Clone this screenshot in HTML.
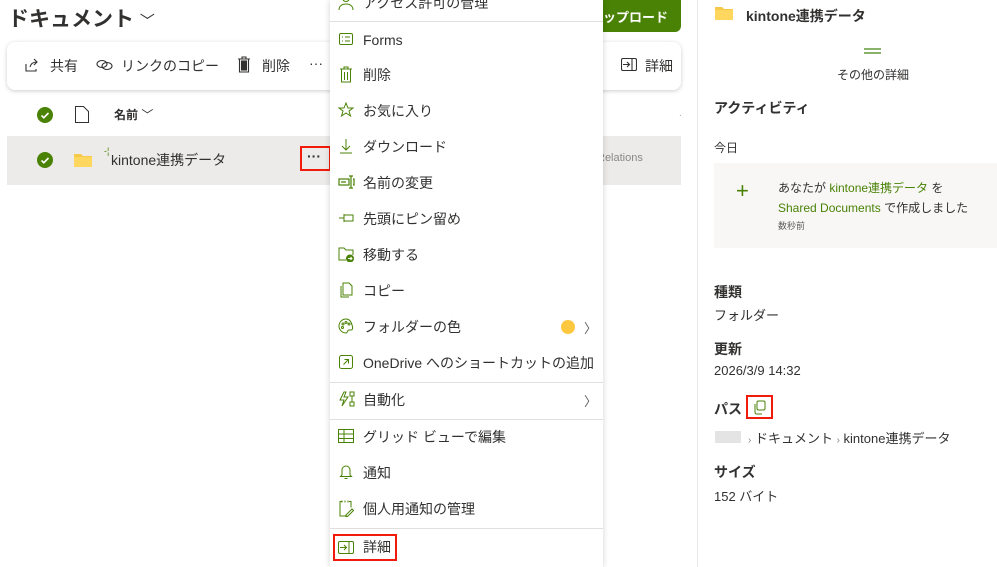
<!DOCTYPE html>
<html><head><meta charset="utf-8"><style>
*{box-sizing:border-box;margin:0;padding:0}
body{width:997px;height:567px;overflow:hidden;background:#fff;font-family:"Liberation Sans","Noto Sans CJK JP",sans-serif;color:#323130;position:relative}
.a{position:absolute;white-space:nowrap}
.mi{position:absolute;left:330px;width:273px;height:36px;font-size:14px;display:flex;align-items:center;color:#323130}
.mi svg{position:absolute;left:8px;top:9px}
.mi span{position:absolute;left:33px}
.dv{position:absolute;left:330px;width:273px;height:1px;background:#e1dfdd}
.g{color:#498205}
.lbl{font-size:14px;font-weight:bold;color:#323130}
.val{font-size:13px;color:#323130}
</style></head><body>
<div class="a" style="left:8px;top:3px;font-size:21px;font-weight:bold">ドキュメント <span style="font-weight:normal;font-size:15px">﹀</span></div>
<div class="a" style="left:7px;top:42px;width:674px;height:48px;border-radius:8px;background:#fff;box-shadow:0 1px 4px rgba(0,0,0,.2)"></div>
<svg class="a" style="left:24px;top:57px" width="16" height="16" viewBox="0 0 16 16" fill="none" stroke="#323130" stroke-width="1.1"><path d="M2 7v7h10v-2M6 10c1-4 4-5 7-5M10 2l3 3-3 3"/></svg>
<div class="a" style="left:50px;top:56px;font-size:14px">共有</div>
<svg class="a" style="left:96px;top:58px" width="18" height="14" viewBox="0 0 18 14" fill="none" stroke="#323130" stroke-width="1.1"><ellipse cx="6" cy="6" rx="5" ry="3.5"/><ellipse cx="11" cy="8" rx="5" ry="3.5"/></svg>
<div class="a" style="left:121px;top:56px;font-size:14px">リンクのコピー</div>
<svg class="a" style="left:237px;top:56px" width="14" height="17" viewBox="0 0 14 17" fill="none" stroke="#323130" stroke-width="1.1"><path d="M1 3h12M5 3V1h4v2M2.5 3v13h9V3"/><rect x="4.5" y="5" width="5" height="9" fill="#323130"/></svg>
<div class="a" style="left:262px;top:56px;font-size:14px">削除</div>
<div class="a" style="left:309px;top:55px;font-size:14px">···</div>
<div class="a" style="left:603px;top:0;width:78px;height:32px;background:#498205;border-radius:0 0 6px 0"></div>
<div class="a" style="left:603px;top:7px;font-size:13px;color:#fff;font-weight:bold">ップロード</div>
<svg class="a" style="left:621px;top:58px" width="16" height="13" viewBox="0 0 16 13" fill="none" stroke="#323130" stroke-width="1.1"><rect x=".5" y=".5" width="15" height="12" rx="1.5"/><path d="M11 1v11M2 6.5h6M6 4l2.5 2.5L6 9"/></svg>
<div class="a" style="left:645px;top:56px;font-size:14px">詳細</div>
<div class="a" style="left:37px;top:107px;width:16px;height:16px;border-radius:50%;background:#498205"></div>
<svg class="a" style="left:37px;top:107px" width="16" height="16"><path d="M4.5 8.5l2.3 2.2L11.5 6" stroke="#fff" stroke-width="1.6" fill="none"/></svg>
<svg class="a" style="left:75px;top:106px" width="14" height="17" viewBox="0 0 14 17" fill="none" stroke="#323130"><path d="M.5.5h8l5 5v11H.5z"/></svg>
<div class="a" style="left:114px;top:106px;font-size:12px;font-weight:bold">名前 <span style="font-weight:normal">﹀</span></div>
<div class="a" style="left:679px;top:108px;font-size:10px;color:#aaa">.</div>
<div class="a" style="left:7px;top:136px;width:674px;height:49px;background:#edebe9"></div>
<div class="a" style="left:37px;top:152px;width:16px;height:16px;border-radius:50%;background:#498205"></div>
<svg class="a" style="left:37px;top:152px" width="16" height="16"><path d="M4.5 8.5l2.3 2.2L11.5 6" stroke="#fff" stroke-width="1.6" fill="none"/></svg>
<svg class="a" style="left:74px;top:153px" width="18" height="14"><path d="M0 1h7l2 2h9v11H0z" fill="#f7c948"/><path d="M0 4h18v10H0z" fill="#ffd75e"/></svg>
<div class="a" style="left:104px;top:146px;font-size:9px;color:#498205">-¦</div>
<div class="a" style="left:111px;top:150px;font-size:14px">kintone連携データ</div>
<div class="a" style="left:300px;top:146px;width:31px;height:25px;border:2px solid #f21a0a"></div>
<div class="a" style="left:307px;top:148px;font-size:14px;font-weight:bold">···</div>
<div class="a" style="left:597px;top:152px;font-size:11px;color:#8a8886">Relations</div>
<div class="a" style="left:330px;top:0;width:273px;height:567px;background:#fff;box-shadow:0 0 6px rgba(0,0,0,.18)"></div>
<div class="mi" style="top:-15px"><svg width="16" height="16" viewBox="0 0 16 16" fill="none" stroke="#498205"><circle cx="8" cy="4" r="3.5"/><path d="M1 16c0-4 3-6 7-6s7 2 7 6"/></svg><span>アクセス許可の管理</span></div>
<div class="dv" style="top:21px"></div>
<div class="mi" style="top:22px"><svg width="16" height="16" viewBox="0 0 16 16" fill="none" stroke="#498205"><rect x="1.5" y="2.5" width="13" height="11" rx="1.5"/><path d="M4 6h1M7 6h5M4 10h1M7 10h5"/></svg><span>Forms</span></div>
<div class="mi" style="top:57px"><svg width="16" height="17" viewBox="0 0 16 17" fill="none" stroke="#498205"><path d="M2 3h12M6 3V1h4v2M3.5 3v13h9V3M6.5 6v8M9.5 6v8"/></svg><span>削除</span></div>
<div class="mi" style="top:93px"><svg width="16" height="16" viewBox="0 0 16 16" fill="none" stroke="#498205"><path d="M8 1l2 5h5l-4 3 1.5 5L8 11l-4.5 3L5 9 1 6h5z"/></svg><span>お気に入り</span></div>
<div class="mi" style="top:129px"><svg width="16" height="16" viewBox="0 0 16 16" fill="none" stroke="#498205"><path d="M8 1v11M4 8l4 4 4-4M2 15h12"/></svg><span>ダウンロード</span></div>
<div class="mi" style="top:165px"><svg width="18" height="16" viewBox="0 0 18 16" fill="none" stroke="#498205" stroke-width="1.2"><rect x="1" y="5" width="10" height="6"/><path d="M3 8h5M13 2v12M11 2h4M11 14h4M15 5h1v6h-1"/></svg><span>名前の変更</span></div>
<div class="mi" style="top:201px"><svg width="16" height="16" viewBox="0 0 16 16" fill="none" stroke="#498205"><path d="M1 8h5M6 4v8M6 5h9v6H6"/></svg><span>先頭にピン留め</span></div>
<div class="mi" style="top:237px"><svg width="16" height="16" viewBox="0 0 16 16" fill="none" stroke="#498205"><path d="M8 14H1V2h5l2 2h7v5"/><circle cx="12" cy="12.5" r="3.5" fill="#498205"/><path d="M10 12.5h4M12.5 11l1.5 1.5-1.5 1.5" stroke="#fff"/></svg><span>移動する</span></div>
<div class="mi" style="top:273px"><svg width="16" height="16" viewBox="0 0 16 16" fill="none" stroke="#498205"><path d="M5 1h6l3 3v9H5zM3 4v11h8"/></svg><span>コピー</span></div>
<div class="mi" style="top:309px"><svg width="16" height="16" viewBox="0 0 16 16" fill="none" stroke="#498205"><path d="M8 1a7 7 0 1 0 0 14c2 0 1-3 3-3h2c2 0 2-3 1-5C13 3 11 1 8 1z"/><circle cx="5" cy="6" r="1"/><circle cx="8" cy="4.5" r="1"/><circle cx="11" cy="6" r="1"/><circle cx="4.5" cy="9.5" r="1"/></svg><span>フォルダーの色</span></div>
<div class="a" style="left:561px;top:320px;width:14px;height:14px;border-radius:50%;background:#fdc83f"></div>
<div class="a" style="left:584px;top:318px;font-size:13px;color:#605e5c">〉</div>
<div class="mi" style="top:345px"><svg width="16" height="16" viewBox="0 0 16 16" fill="none" stroke="#498205"><rect x="1.5" y="1.5" width="13" height="13" rx="2"/><path d="M5.5 10.5l5-5M6.5 5.5h4v4"/></svg><span>OneDrive へのショートカットの追加</span></div>
<div class="dv" style="top:382px"></div>
<div class="mi" style="top:382px"><svg width="17" height="16" viewBox="0 0 17 16" fill="none" stroke="#498205"><path d="M6 1L2 9h4l-2 6 6-9H6l2-5z"/><rect x="12" y="1" width="4" height="4"/><rect x="12" y="11" width="4" height="4"/><path d="M14 5v6"/></svg><span>自動化</span></div>
<div class="a" style="left:584px;top:391px;font-size:13px;color:#605e5c">〉</div>
<div class="dv" style="top:419px"></div>
<div class="mi" style="top:419px"><svg width="16" height="16" viewBox="0 0 16 16" fill="none" stroke="#498205"><rect x=".5" y="1.5" width="15" height="13"/><path d="M.5 6h15M.5 10.5h15M6 1.5v13"/></svg><span>グリッド ビューで編集</span></div>
<div class="mi" style="top:455px"><svg width="16" height="16" viewBox="0 0 16 16" fill="none" stroke="#498205"><path d="M4 11V6a4 4 0 0 1 8 0v5l1.5 1.5h-11zM6.5 14.5h3"/></svg><span>通知</span></div>
<div class="mi" style="top:491px"><svg width="16" height="17" viewBox="0 0 16 17" fill="none" stroke="#498205"><path d="M11 1.5h2v6M9 16H2V1.5h2M4 .5v2M7 .5v2M10 .5v2M8 15l6-6 1.5 1.5-6 6H8z"/></svg><span>個人用通知の管理</span></div>
<div class="dv" style="top:528px"></div>
<div class="mi" style="top:529px"><svg width="16" height="13" viewBox="0 0 16 13" fill="none" stroke="#498205" style="top:12px"><rect x=".5" y=".5" width="15" height="12" rx="1.5"/><path d="M11 1v11M2 6.5h6M6 4l2.5 2.5L6 9"/></svg><span>詳細</span></div>
<div class="a" style="left:333px;top:534px;width:64px;height:27px;border:2px solid #f21a0a"></div>
<div class="a" style="left:697px;top:0;width:1px;height:567px;background:#edebe9"></div>
<svg class="a" style="left:715px;top:6px" width="18" height="14"><path d="M0 1h7l2 2h9v11H0z" fill="#f7c948"/><path d="M0 4h18v10H0z" fill="#ffd75e"/></svg>
<div class="a" style="left:746px;top:6px;font-size:14px;font-weight:bold">kintone連携データ</div>
<div class="a" style="left:864px;top:48px;width:17px;height:2px;background:#8bb26a"></div>
<div class="a" style="left:864px;top:52px;width:17px;height:2px;background:#8bb26a"></div>
<div class="a" style="left:837px;top:66px;font-size:12px">その他の詳細</div>
<div class="a lbl" style="left:714px;top:98px">アクティビティ</div>
<div class="a" style="left:714px;top:139px;font-size:12px">今日</div>
<div class="a" style="left:714px;top:163px;width:283px;height:85px;background:#f8f7f6"></div>
<div class="a g" style="left:736px;top:178px;font-size:22px;font-weight:200">+</div>
<div class="a" style="left:778px;top:179px;font-size:12px">あなたが <span class="g">kintone連携データ</span> を</div>
<div class="a" style="left:778px;top:199px;font-size:12px"><span class="g">Shared Documents</span> で作成しました</div>
<div class="a" style="left:778px;top:219px;font-size:9px;color:#605e5c">数秒前</div>
<div class="a lbl" style="left:714px;top:282px">種類</div>
<div class="a val" style="left:714px;top:305px">フォルダー</div>
<div class="a lbl" style="left:714px;top:339px">更新</div>
<div class="a val" style="left:714px;top:363px">2026/3/9 14:32</div>
<div class="a lbl" style="left:714px;top:399px">パス</div>
<div class="a" style="left:746px;top:395px;width:27px;height:24px;border:2px solid #f21a0a"></div>
<svg class="a" style="left:752px;top:400px" width="15" height="15" viewBox="0 0 15 15" fill="none" stroke="#498205"><rect x="5" y="1" width="8" height="9" rx="1.5"/><path d="M3 4v8.5c0 .8.7 1.5 1.5 1.5H10"/></svg>
<div class="a" style="left:715px;top:431px;width:26px;height:12px;background:#e4e4e4"></div>
<div class="a val" style="left:748px;top:428px"><span style="color:#8a8886;font-size:10px">›</span> ドキュメント <span style="color:#8a8886;font-size:10px">›</span> kintone連携データ</div>
<div class="a lbl" style="left:714px;top:462px">サイズ</div>
<div class="a val" style="left:714px;top:486px">152 バイト</div>
</body></html>
